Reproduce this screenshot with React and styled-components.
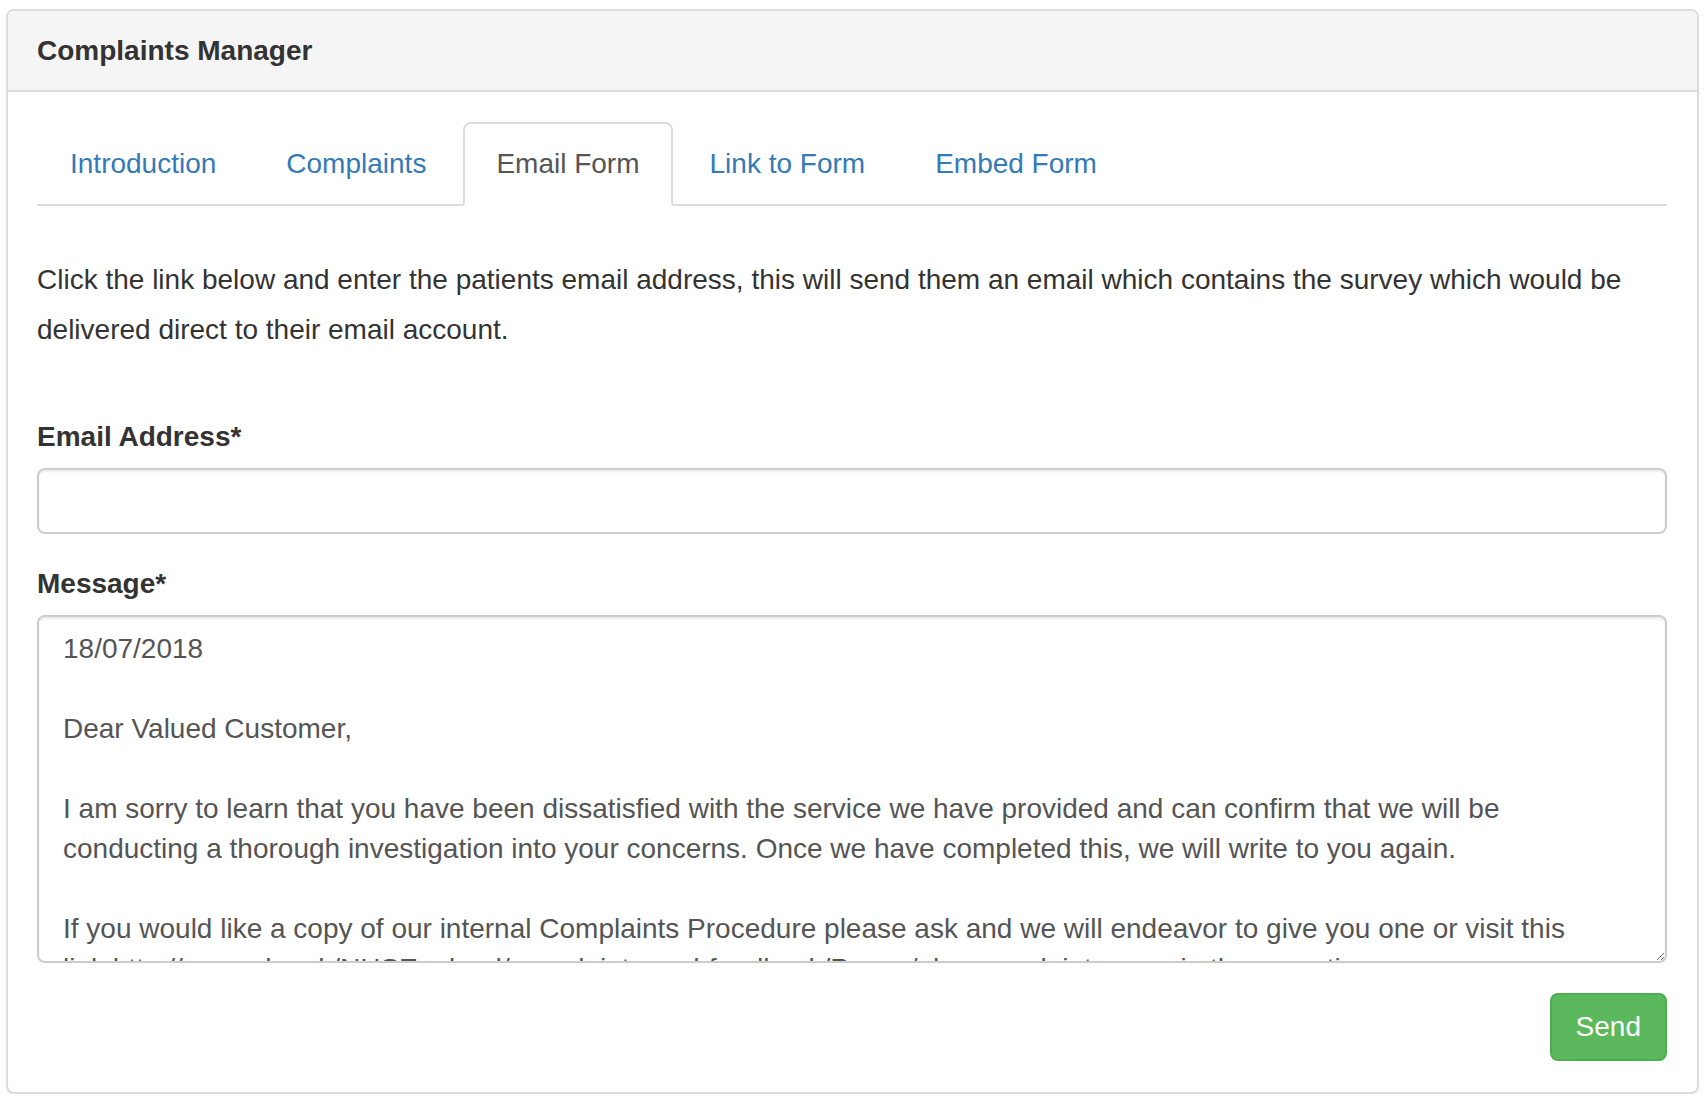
import { useState } from "react";
import styled, { createGlobalStyle } from "styled-components";

const GlobalStyle = createGlobalStyle`
  body {
    margin: 0;
    background: #fff;
    font-family: "Liberation Sans", Helvetica, Arial, sans-serif;
    color: #333;
  }
  * {
    box-sizing: border-box;
  }
`;

const Page = styled.div`
  padding: 9px 9px 0 6px;
`;

const Panel = styled.div`
  border: 2px solid #ddd;
  border-radius: 8px;
  background: #fff;
  box-shadow: 0 2px 2px rgba(0, 0, 0, 0.05);
`;

const PanelHeading = styled.div`
  background: #f5f5f5;
  border-bottom: 2px solid #ddd;
  border-radius: 6px 6px 0 0;
  padding: 20px 30px 20px 29px;
`;

const PanelTitle = styled.h3`
  margin: 0;
  font-size: 28px;
  line-height: 39px;
  font-weight: bold;
  color: #333;
`;

const PanelBody = styled.div`
  padding: 30px 30px 31px 29px;
`;

const Tabs = styled.ul`
  display: flex;
  margin: 0;
  padding: 0;
  list-style: none;
  border-bottom: 2px solid #ddd;
`;

const TabItem = styled.li`
  margin-bottom: -2px;
  margin-right: 4px;
`;

const TabLink = styled.a`
  display: block;
  padding: 20px 31px;
  font-size: 28px;
  line-height: 40px;
  text-decoration: none;
  cursor: pointer;
  border: 2px solid ${({ $active }) => ($active ? "#ddd" : "transparent")};
  border-bottom-color: ${({ $active }) => ($active ? "#fff" : "transparent")};
  border-radius: 8px 8px 0 0;
  background: ${({ $active }) => ($active ? "#fff" : "transparent")};
  color: ${({ $active }) => ($active ? "#555" : "#337ab7")};
`;

const Intro = styled.p`
  margin: 49px 0 62px;
  font-size: 28px;
  line-height: 50px;
  color: #333;
`;

const FormGroup = styled.div`
  margin-bottom: 30px;
`;

const Label = styled.label`
  display: block;
  margin-bottom: 11px;
  font-size: 28px;
  line-height: 40px;
  font-weight: bold;
  color: #333;
`;

const Input = styled.input`
  display: block;
  width: 100%;
  height: 66px;
  padding: 12px 24px;
  font-family: inherit;
  font-size: 28px;
  color: #555;
  border: 2px solid #ccc;
  border-radius: 8px;
  box-shadow: inset 0 2px 2px rgba(0, 0, 0, 0.075);
  outline: none;
`;

const TextArea = styled.textarea`
  display: block;
  width: 100%;
  height: 348px;
  padding: 12px 24px;
  font-family: inherit;
  font-size: 28px;
  line-height: 40px;
  color: #555;
  border: 2px solid #ccc;
  border-radius: 8px;
  box-shadow: inset 0 2px 2px rgba(0, 0, 0, 0.075);
  resize: vertical;
  outline: none;
  scrollbar-width: none;
  &::-webkit-scrollbar {
    display: none;
  }
`;

const Actions = styled.div`
  display: flex;
  justify-content: flex-end;
`;

const SendButton = styled.button`
  padding: 12px 24px;
  font-family: inherit;
  font-size: 28px;
  line-height: 40px;
  color: #fff;
  background: #5cb85c;
  border: 2px solid #4cae4c;
  border-radius: 8px;
  cursor: pointer;
`;

const tabs = ["Introduction", "Complaints", "Email Form", "Link to Form", "Embed Form"];

const message = `18/07/2018

Dear Valued Customer,

I am sorry to learn that you have been dissatisfied with the service we have provided and can confirm that we will be conducting a thorough investigation into your concerns. Once we have completed this, we will write to you again.

If you would like a copy of our internal Complaints Procedure please ask and we will endeavor to give you one or visit this link:http://www.nhs.uk/NHSEngland/complaints-and-feedback/Pages/nhs-complaints.aspx in the meantime.

Yours sincerely,`;

const App = () => {
  const [active, setActive] = useState("Email Form");
  const [email, setEmail] = useState("");
  const [body, setBody] = useState(message);

  return (
    <Page>
      <GlobalStyle />
      <Panel>
        <PanelHeading>
          <PanelTitle>Complaints Manager</PanelTitle>
        </PanelHeading>
        <PanelBody>
          <Tabs>
            {tabs.map((tab) => (
              <TabItem key={tab}>
                <TabLink $active={tab === active} onClick={() => setActive(tab)}>
                  {tab}
                </TabLink>
              </TabItem>
            ))}
          </Tabs>

          <Intro>
            Click the link below and enter the patients email address, this will send them an
            email which contains the survey which would be delivered direct to their email account.
          </Intro>

          <FormGroup>
            <Label htmlFor="email">Email Address*</Label>
            <Input id="email" type="email" value={email} onChange={(e) => setEmail(e.target.value)} />
          </FormGroup>

          <FormGroup>
            <Label htmlFor="message">Message*</Label>
            <TextArea id="message" value={body} onChange={(e) => setBody(e.target.value)} />
          </FormGroup>

          <Actions>
            <SendButton type="button">Send</SendButton>
          </Actions>
        </PanelBody>
      </Panel>
    </Page>
  );
};

export default App;
